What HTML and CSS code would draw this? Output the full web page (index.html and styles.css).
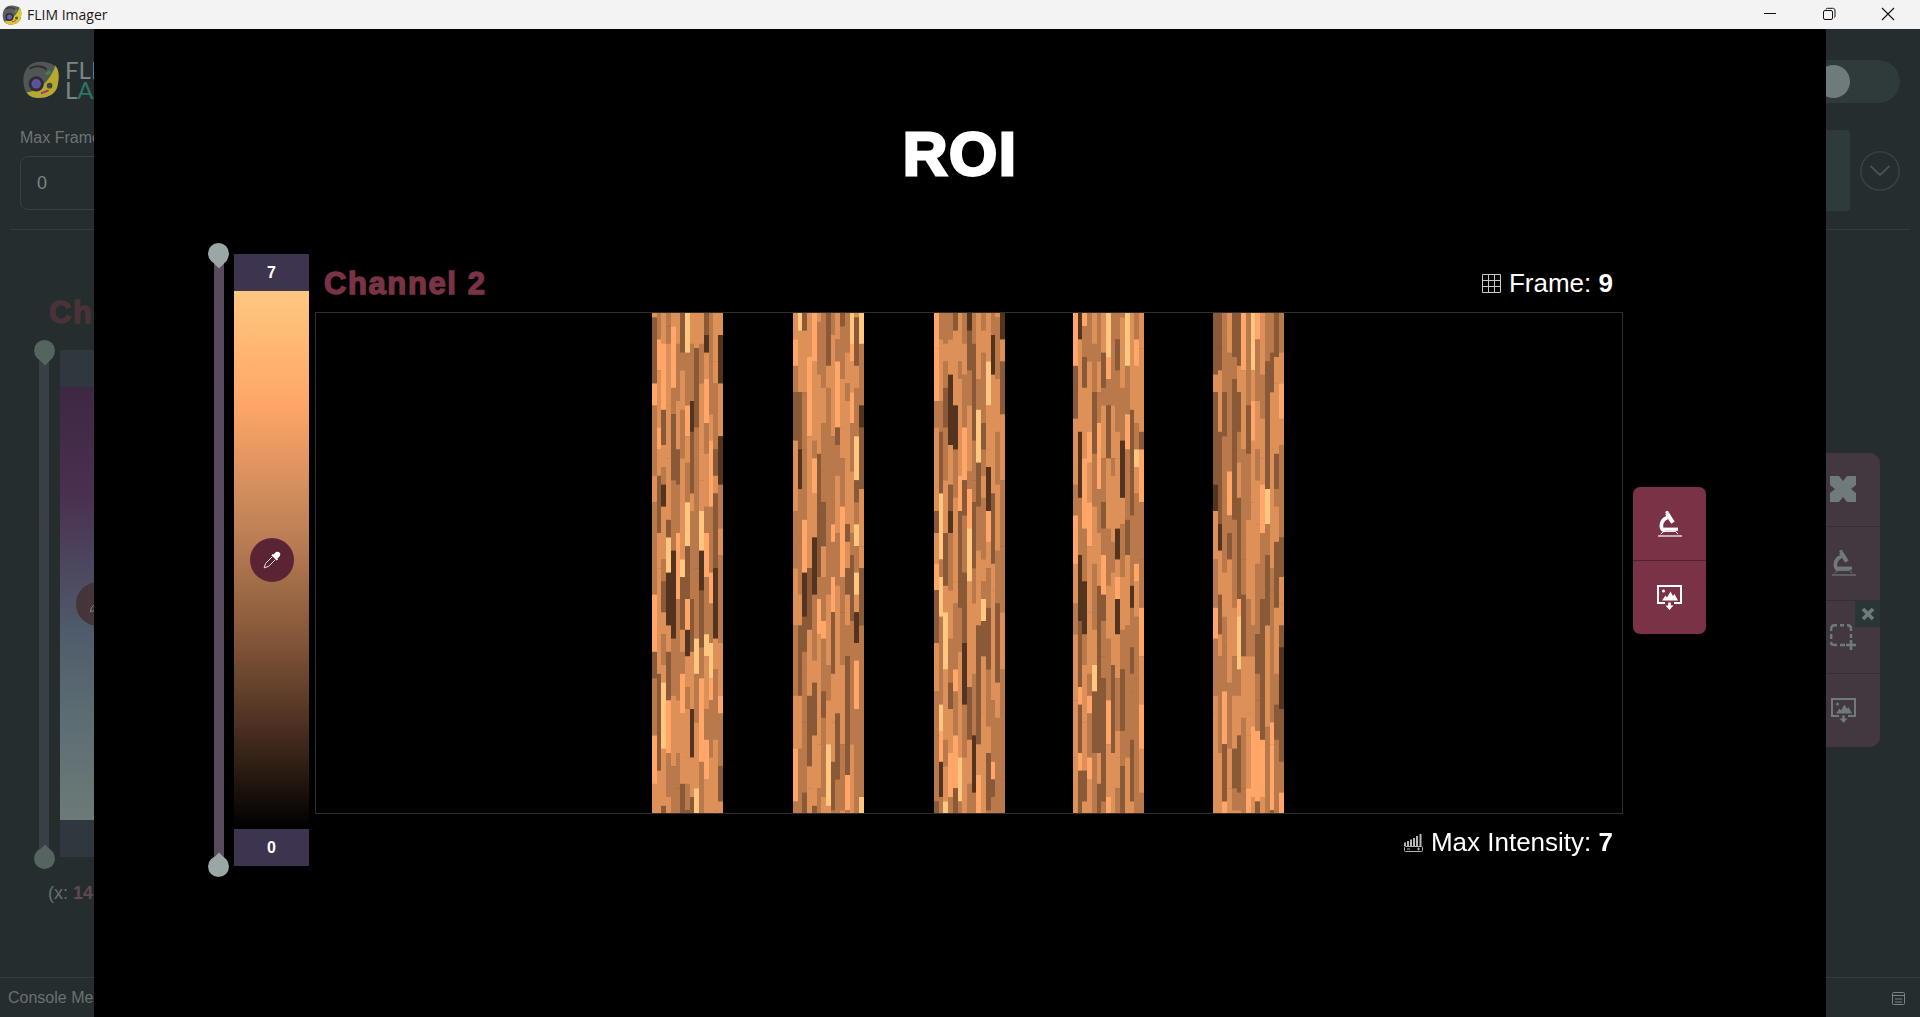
FILE: index.html
```html
<!DOCTYPE html>
<html lang="en">
<head>
<meta charset="utf-8">
<title>FLIM Imager</title>
<link rel="stylesheet" href="styles.css">
</head>
<body>
<svg class="defs" width="0" height="0" aria-hidden="true">
  <defs>
    <symbol id="i-cell" viewBox="0 0 40 40">
      <path d="M12 2 C20 -1 30 2 35 5 C40 10 39 20 37 28 C34 36 26 39 17 39 C8 39 3 34 2 26 C0 16 3 6 12 2Z" fill="#5b5f5f"/>
      <path d="M35 5 C40 10 39 20 37 28 C34 36 26 39 17 39 C12 39 7 37 5 33 C18 32 30 20 35 5Z" fill="#d9c92f"/>
      <circle cx="15" cy="24" r="8" fill="#2d2f33"/>
      <circle cx="15" cy="24" r="5" fill="#8a4fb5"/>
      <circle cx="15" cy="24" r="2.6" fill="#3c6fc0"/>
      <circle cx="29" cy="26" r="3" fill="#4a4f3a"/>
      <path d="M8 8 C14 4 22 5 26 9" fill="none" stroke="#2d2f33" stroke-width="2"/>
      <path d="M25 14 l5 -3" stroke="#3f9a62" stroke-width="3" fill="none"/>
      <path d="M20 34 l8 -3" stroke="#c2367a" stroke-width="2" fill="none"/>
    </symbol>
    <symbol id="i-scope" viewBox="0 0 24 26">
      <path d="M7.200 3.200 L10.600 1 L16.600 10.600 L13.200 12.800Z" fill="currentColor"/>
      <rect x="7.400" y="0" width="3" height="2" fill="currentColor" transform="rotate(-32 9 1)"/>
      <path d="M9.500 6.500 C3.800 8 2 15 4.400 18.400 L7 20" fill="none" stroke="currentColor" stroke-width="3.600"/>
      <rect x="6" y="16.600" width="14" height="3.200" fill="currentColor"/>
      <path d="M2.600 23.200 L5.600 20.400 H17.600 L20 23.200" fill="none" stroke="currentColor" stroke-width="1"/>
      <rect x="0" y="24.400" width="24" height="1.200" fill="currentColor"/>
    </symbol>
    <symbol id="i-save" viewBox="0 0 25 25">
      <path d="M8 18 H1 V1 H24 V18 H17" fill="none" stroke="currentColor" stroke-width="2"/>
      <path d="M5 15.500 L8.500 10.500 L10 12.500 L13.500 6.500 L16 11 L17.500 9 L21 15.500Z" fill="currentColor"/>
      <circle cx="6.500" cy="6" r="1.500" fill="currentColor"/>
      <path d="M11.200 17.500 H13.800 V20.500 H16.500 L12.500 25 L8.500 20.500 H11.200Z" fill="currentColor"/>
    </symbol>
  </defs>
</svg>
<div class="window">
  <header class="titlebar">
    <div class="tb-left">
      <svg class="tb-logo" width="20" height="20"><use href="#i-cell"/></svg>
      <span class="tb-title">FLIM Imager</span>
    </div>
    <div class="tb-controls">
      <svg class="tb-btn" width="48" height="29" viewBox="0 0 48 29"><path d="M18 13.500 H30" stroke="#111" stroke-width="1"/></svg>
      <svg class="tb-btn" width="48" height="29" viewBox="0 0 48 29"><rect x="18.500" y="10.500" width="9" height="9" rx="1.500" fill="none" stroke="#111"/><path d="M21 9.500 C21 8.600 21.600 8.300 22.500 8.300 H27.500 C29.500 8.300 30 9 30 11 V16 C30 17 29.700 17.300 29 17.500" fill="none" stroke="#111"/></svg>
      <svg class="tb-btn" width="48" height="29" viewBox="0 0 48 29"><path d="M18 8 L30 20 M30 8 L18 20" stroke="#111" stroke-width="1.100"/></svg>
    </div>
  </header>

  <div class="stage">
    <div class="app">
      <div class="app-top">
        <div class="brand">
          <svg class="brand-logo" width="38" height="40"><use href="#i-cell"/></svg>
          <div class="brand-text"><span>FLIM</span><span>L<i class="brand-wave">A</i>B</span></div>
        </div>
        <div class="toggle"><span class="knob"></span></div>
      </div>
      <div class="controls">
        <div class="field">
          <label class="field-label">Max Frames</label>
          <div class="field-input">0</div>
        </div>
        <div class="controls-right">
          <div class="action-box"></div>
          <svg class="chevron" width="40" height="40" viewBox="0 0 40 40"><circle cx="20" cy="20" r="19.200" fill="none" stroke="#3c4546" stroke-width="1.300"/><path d="M10.500 15 L20 24 L29.500 15" fill="none" stroke="#485051" stroke-width="2"/></svg>
        </div>
      </div>
      <div class="rule"></div>
      <div class="app-main">
        <div class="plot-left">
          <div class="bg-channel">Channel 1</div>
          <div class="bg-scale">
            <div class="bg-slider">
              <span class="bg-thumb bg-thumb-top"></span>
              <span class="bg-thumb bg-thumb-bottom"></span>
            </div>
            <div class="bg-bar">
              <div class="bg-cap">7</div>
              <div class="bg-grad">
                <span class="bg-pick"><svg width="18" height="18" viewBox="0 0 18 18"><path d="M9.400 5.600 L2.600 12.400 L1.200 16.800 L5.600 15.400 L12.400 8.600" fill="none" stroke="#7b8585"/></svg></span>
              </div>
              <div class="bg-cap">0</div>
            </div>
          </div>
          <div class="bg-coords">(x: <b>14</b></div>
        </div>
        <div class="tools">
          <div class="tool">
            <svg class="tool-icon" width="26" height="26" viewBox="0 0 26 26"><path fill-rule="evenodd" d="M0 0H26V26H0Z M9 0 L13 5 L17 0Z M9 26 L13 21 L17 26Z M0 9 L5 13 L0 17Z M26 9 L21 13 L26 17Z" fill="#6f7b7b"/></svg>
          </div>
          <div class="tool"><svg class="tool-icon" width="24" height="26"><use href="#i-scope"/></svg></div>
          <div class="tool tool-roi">
            <span class="tool-close"><svg width="14" height="14" viewBox="0 0 14 14"><path d="M2 2 L12 12 M12 2 L2 12" stroke="#6f7b7b" stroke-width="3.600"/></svg></span>
            <svg class="tool-icon tool-roi-icon" width="26" height="26" viewBox="0 0 26 26"><path d="M7 1.200 H5 Q1.200 1.200 1.200 5 V7 M1.200 10 V15 M1.200 18 V19 Q1.200 21 5 21 H7 M10 21 H15 M10 1.200 H14 M17 1.200 H18 Q21 1.200 21 5 V7 M21 10 V14" fill="none" stroke="#6f7b7b" stroke-width="2.400"/><path d="M21 16 V26 M16 21 H26" stroke="#6f7b7b" stroke-width="2.600"/></svg>
          </div>
          <div class="tool"><svg class="tool-icon" width="25" height="25"><use href="#i-save"/></svg></div>
        </div>
      </div>
      <footer class="console">
        <span>Console Messages</span>
        <svg width="13" height="13" viewBox="0 0 13 13"><rect x=".5" y=".5" width="12" height="12" rx="1" fill="none" stroke="#7a8484"/><path d="M0 3.500 H13 M3 7 H10 M3 10 H10" stroke="#7a8484"/></svg>
      </footer>
    </div>

    <section class="modal">
      <h1 class="modal-title">ROI</h1>
      <div class="viewer">
        <div class="range">
          <span class="range-thumb range-thumb-top"></span>
          <span class="range-thumb range-thumb-bottom"></span>
        </div>
        <div class="colorbar">
          <div class="colorbar-cap">7</div>
          <div class="colorbar-grad">
            <span class="picker">
              <svg width="18" height="18" viewBox="0 0 18 18"><path d="M12 2 C13 .6 15.400 .4 16.600 1.600 C17.800 2.800 17.400 5 16 6 L14.400 7.400 L15 8.400 L13.800 9.600 L8.400 4.200 L9.600 3 L10.600 3.600Z" fill="#fff"/><path d="M9.400 5.600 L2.600 12.400 L1.200 16.800 L5.600 15.400 L12.400 8.600" fill="none" stroke="#e8dfe2" stroke-width="1"/></svg>
            </span>
          </div>
          <div class="colorbar-cap">0</div>
        </div>
        <div class="plot">
          <div class="plot-head">
            <div class="channel">Channel 2</div>
            <div class="stat">
              <svg class="stat-icon" width="19" height="19" viewBox="0 0 19 19"><path d="M.5.500H18.500V18.500H.5Z M6.500.5V18.500 M12.500.5V18.500 M.5 6.500H18.500 M.5 12.500H18.500" fill="none" stroke="#c9c9c9"/></svg>
              <span>Frame: <b>9</b></span>
            </div>
          </div>
          <div class="image"><canvas id="roi" class="roi-canvas" width="1306" height="500"></canvas></div>
          <div class="plot-foot">
            <div class="stat">
              <svg class="stat-icon" width="19" height="19" viewBox="0 0 19 19"><path d="M1 13 V9.500 M4 13 V8 M7 13 V6.500 M10 13 V5 M13 13 V3 M16.500 13 V1" stroke="#b5b5b5" stroke-width="2"/><rect x=".5" y="13.500" width="18" height="5" rx="1" fill="none" stroke="#b5b5b5"/><path d="M3 16 H6 M13 16 H16 M14.500 14.700 V17.300" stroke="#b5b5b5"/></svg>
              <span>Max Intensity: <b>7</b></span>
            </div>
          </div>
        </div>
        <div class="actions">
          <button class="action"><svg width="24" height="26"><use href="#i-scope"/></svg></button>
          <button class="action"><svg width="25" height="25"><use href="#i-save"/></svg></button>
        </div>
      </div>
    </section>
  </div>
</div>
<script src="roi.js"></script>
</body>
</html>
```
FILE: styles.css
```css
* { box-sizing: border-box; }
html, body { margin: 0; height: 100%; overflow: hidden; }
body { font-family: "Liberation Sans", Arial, sans-serif; background: #000; }
.defs { position: absolute; }

.window { height: 1017px; display: flex; flex-direction: column; }

.titlebar { height: 29px; flex: none; background: #f3f3f3; display: flex; justify-content: space-between; }
.tb-left { display: flex; align-items: center; padding-left: 2px; gap: 5px; }
.tb-title { font-family: "Open Sans", sans-serif; font-size: 14px; color: #1a1a1a; }
.tb-controls { display: flex; gap: 11px; padding-right: 8px; }
.tb-btn { display: block; }

.stage { position: relative; flex: 1; min-height: 0; }

/* dimmed application behind the modal */
.app { height: 100%; background: #252d2f; display: flex; flex-direction: column; }
.app-top { height: 101px; flex: none; display: flex; justify-content: space-between; padding: 31px 20px 0 22px; }
.brand { display: flex; gap: 5px; height: 40px; }
.brand-logo { opacity: .8; }
.brand-text { display: flex; flex-direction: column; font-family: "Lato", sans-serif; font-size: 24px; line-height: 20px; color: #7b8585; }
.brand-wave { font-style: normal; color: #2a7565; }
.toggle { width: 130px; height: 43px; border-radius: 22px; background: #2f3a3b; position: relative; }
.knob { position: absolute; left: 47px; top: 5px; width: 33px; height: 33px; border-radius: 50%; background: #6f7b7b; }

.controls { height: 81px; flex: none; display: flex; justify-content: space-between; padding: 0 20px; }
.field { margin-top: -2px; width: 400px; }
.field-label { display: block; font-size: 16px; line-height: 20px; margin-bottom: 8px; color: #6c7575; }
.field-input { height: 54px; border: 1px solid #394243; border-radius: 8px; padding-left: 16px; font-size: 18px; line-height: 52px; color: #7b8585; }
.controls-right { display: flex; align-items: center; gap: 10px; }
.action-box { width: 400px; height: 81px; background: #2f3a3a; border-radius: 4px; }

.rule { height: 1px; flex: none; margin: 18px 10px 0; background: #343c3d; }

.app-main { flex: 1; min-height: 0; display: flex; justify-content: space-between; padding-right: 40px; }
.plot-left { padding: 65px 0 0 34px; }
.bg-channel { font-size: 31px; line-height: 36px; font-weight: 700; letter-spacing: 1.600px; color: #4a3338; margin-left: 15px; -webkit-text-stroke: 1.400px #4a3338; }
.bg-scale { display: flex; gap: 6px; height: 529px; margin-top: 9px; }
.bg-slider { position: relative; width: 20px; }
.bg-slider::before { content: ""; position: absolute; left: 5px; right: 5px; top: 12px; bottom: 12px; background: #383f46; }
.bg-thumb { position: absolute; left: 0; width: 21px; height: 21px; background: #56645f; border-radius: 50%; }
.bg-thumb::after { content: ""; position: absolute; left: 4.500px; width: 12px; height: 12px; background: #56645f; transform: rotate(45deg); }
.bg-thumb-top { top: 0; }
.bg-thumb-top::after { top: 10.500px; }
.bg-thumb-bottom { bottom: 0; }
.bg-thumb-bottom::after { bottom: 10.500px; }
.bg-bar { width: 400px; display: flex; flex-direction: column; margin-top: 10px; height: 507px; }
.bg-cap { height: 37px; flex: none; background: #30383f; color: #7b8585; text-align: center; }
.bg-grad { flex: 1; position: relative; background: linear-gradient(#3d2842, #4a3050 25%, #4e5a6a 55%, #5b6c72 75%, #6c7a78); }
.bg-pick { position: absolute; left: 16px; top: 195px; width: 44px; height: 44px; border-radius: 50%; background: #453439; display: flex; align-items: center; justify-content: center; }
.bg-coords { margin: 13px 0 0 14px; font-size: 18px; line-height: 22px; color: #65706f; }
.bg-coords b { color: #5e4a50; }

.tools { width: 400px; margin-top: 223px; height: 294px; background: #433840; border-radius: 10px; display: flex; flex-direction: column; }
.tool { flex: 1; display: flex; align-items: center; justify-content: flex-end; padding-right: 24px; color: #6f7b7b; position: relative; }
.tool + .tool { border-top: 1px solid #372e35; }
.tool-close { position: absolute; right: 0; top: 0; width: 25px; height: 26px; background: #2a3537; display: flex; align-items: center; justify-content: center; }
.tool-icon { display: block; }

.console { height: 40px; flex: none; border-top: 1px solid #353d3e; display: flex; justify-content: space-between; align-items: center; padding: 1px 15px 0 8px; font-size: 16px; color: #69726f; }

/* modal */
.modal { position: absolute; left: 94px; top: 0; bottom: 0; width: 1732px; background: #000; display: flex; flex-direction: column; }
.modal-title { margin: 90px 0 0; height: 70px; font-size: 62px; line-height: 70px; font-weight: 700; text-align: center; color: #fff; letter-spacing: 1.500px; -webkit-text-stroke: 2.800px #fff; }
.viewer { display: flex; margin: 54px 0 0 114px; height: 634px; gap: 6px; }

.range { width: 21px; position: relative; flex: none; }
.range::before { content: ""; position: absolute; left: 6px; width: 10px; top: 12px; bottom: 12px; background: #5a4a5e; }
.range-thumb { position: absolute; left: 0; width: 21px; height: 21px; background: #9ba6a6; border-radius: 50%; }
.range-thumb::after { content: ""; position: absolute; left: 4.500px; width: 12px; height: 12px; background: #9ba6a6; transform: rotate(45deg); }
.range-thumb-top { top: 0; }
.range-thumb-top::after { top: 10.500px; }
.range-thumb-bottom { bottom: 0; }
.range-thumb-bottom::after { bottom: 10.500px; }

.colorbar { width: 75px; flex: none; margin: 11px 0 0 -1px; height: 612px; display: flex; flex-direction: column; }
.colorbar-cap { height: 37px; flex: none; background: #3d3450; color: #fff; font-size: 16px; font-weight: 700; line-height: 37px; text-align: center; }
.colorbar-grad { flex: 1; display: flex; align-items: center; justify-content: center; background: linear-gradient(#ffc77f 0%, #ffa668 21%, #c08257 44%, #8c5c3c 62%, #4f3222 80%, #000 100%); }
.picker { width: 44px; height: 44px; border-radius: 50%; background: #5a2434; display: flex; align-items: center; justify-content: center; }

.plot { width: 1308px; flex: none; margin-top: 11px; }
.plot-head { height: 58px; display: flex; justify-content: space-between; align-items: flex-start; padding: 0 10px 0 9px; }
.channel { font-size: 31px; line-height: 36px; margin-top: 12px; font-weight: 700; letter-spacing: 1.600px; color: #7a3346; -webkit-text-stroke: 1.400px #7a3346; }
.stat { display: flex; align-items: center; gap: 8px; font-size: 26px; line-height: 30px; color: #fff; }
.plot-head .stat { margin-top: 14px; }
.stat-icon { display: block; margin-top: 1px; }
.image { height: 502px; border: 1px solid #2e2e2e; background: #000; }
.roi-canvas { display: block; }
.plot-foot { display: flex; justify-content: flex-end; padding: 13px 10px 0 0; }

.actions { width: 73px; height: 147px; flex: none; margin: 244px 0 0 4px; background: #7a3346; border-radius: 7px; display: flex; flex-direction: column; overflow: hidden; }
.action { flex: 1; border: 0; padding: 0; background: transparent; color: #fff; display: flex; align-items: center; justify-content: center; }
.action + .action { border-top: 1px solid #4e2230; }
```
FILE: roi.js
```js
(function () {
  var canvas = document.getElementById('roi');
  var ctx = canvas.getContext('2d');
  var seed = 20240611;
  function rnd() {
    seed = (seed * 1664525 + 1013904223) >>> 0;
    return ((seed >>> 8) % 1000000) / 1000000;
  }
  var palette = [
    [0.03, '#ffc77f'], [0.11, '#ffa668'], [0.47, '#de9059'],
    [0.79, '#b9794b'], [0.96, '#8a5a38'], [1.00, '#55341f']
  ];
  function pick() {
    var r = rnd();
    for (var i = 0; i < palette.length; i++) {
      if (r <= palette[i][0]) return palette[i][1];
    }
    return palette[2][1];
  }
  var starts = [336, 477, 618, 757, 897];
  var columns = 15;
  var colW = 4.72;
  var rowH = 4.4;
  starts.forEach(function (x0) {
    for (var c = 0; c < columns; c++) {
      var y = -Math.floor(rnd() * 6) * rowH;
      while (y < canvas.height) {
        var h = rowH * (4 + Math.floor(rnd() * 13));
        var left = Math.round(x0 + c * colW);
        var right = Math.round(x0 + (c + 1) * colW);
        ctx.fillStyle = pick();
        ctx.fillRect(left, y, right - left, h + 0.5);
        y += h;
      }
    }
  });
})();
```
